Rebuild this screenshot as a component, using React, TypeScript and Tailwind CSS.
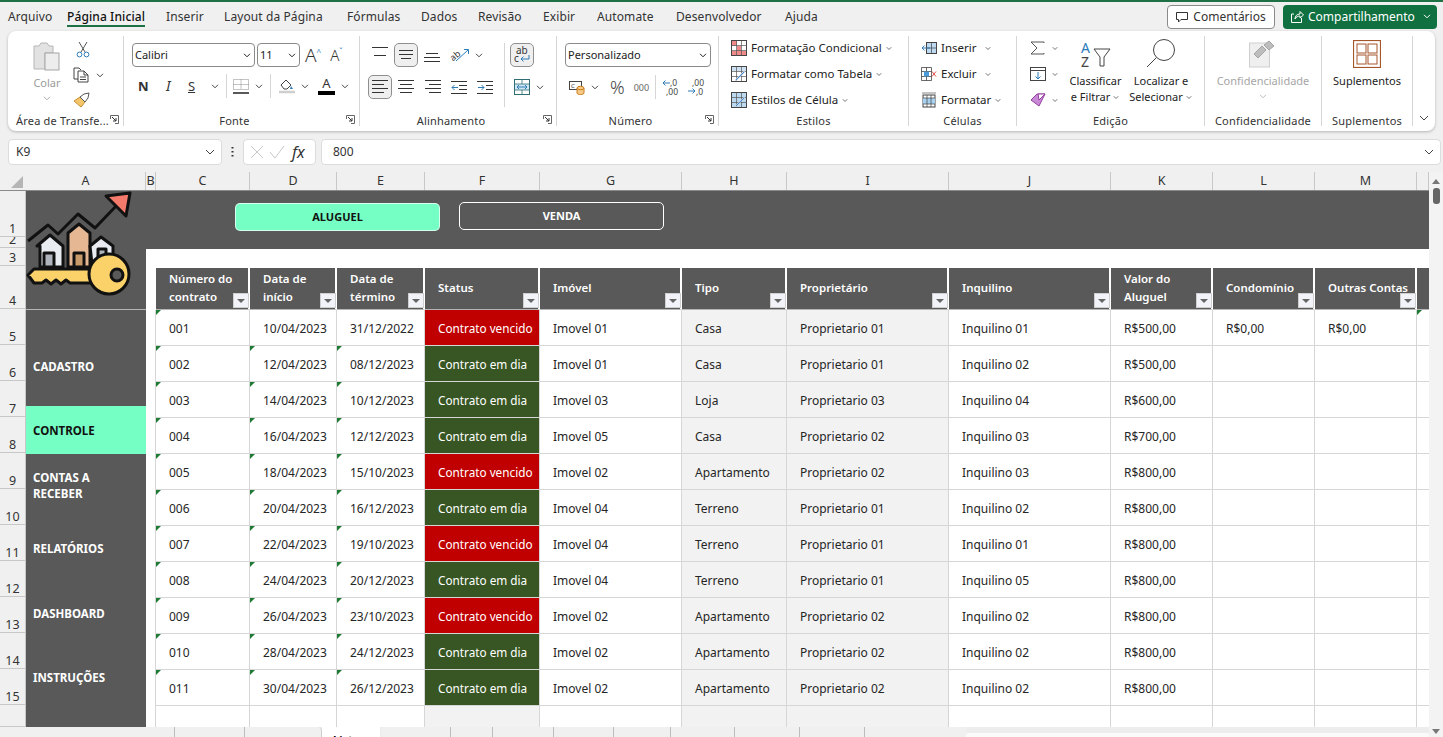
import React from "react";

const Chev = ({ c = "#444", className = "" }: { c?: string; className?: string }) => (
  <svg width="8" height="5" viewBox="0 0 8 5" className={"shrink-0 " + className}>
    <path d="M1 .8l3 3 3-3" fill="none" stroke={c} strokeWidth="1" />
  </svg>
);

// launcher in the corner of a ribbon group
const Launcher = () => (
  <svg width="9" height="9" viewBox="0 0 9 9" className="absolute right-[4px] bottom-[2px]">
    <path d="M.5 4V.5H8.5V8.5H5" fill="none" stroke="#666" />
    <path d="M2 2l4 4M6 3v3H3" fill="none" stroke="#333" />
  </svg>
);

const Group = ({ w, label, launcher, left, children }: { w: string; label: string; launcher?: boolean; left?: boolean; children: React.ReactNode }) => (
  <div className={w + " relative my-[5px] flex shrink-0 flex-col border-r border-[#d6d6d6]"}>
    <div className="h-[77px]">{children}</div>
    <div className={"h-[13px] text-[11px] leading-[15px] text-[#333] tracking-[.2px] whitespace-nowrap " + (left ? "pl-[8px]" : launcher ? "pr-[14px] text-center" : "text-center")}>{label}</div>
    {launcher && <Launcher />}
  </div>
);

const Select = ({ w, text }: { w: string; text: string }) => (
  <div className={w + " flex h-[24px] shrink-0 items-center justify-between rounded-[4px] border border-[#8a8a8a] bg-white pl-[2px] pr-[3px] text-[11px] text-[#222]"}>
    <span>{text}</span>
    <Chev c="#222" />
  </div>
);

// horizontal text lines, used for all the alignment icons
const Lines = ({ rows, x = [0, 0, 0, 0], c = "#333" }: { rows: number[]; x?: number[]; c?: string }) => (
  <svg width="16" height={rows.length * 4} viewBox={`0 0 16 ${rows.length * 4}`} className="shrink-0">
    {rows.map((r, i) => (
      <path key={i} d={`M${x[i]} ${i * 4 + 1.5}h${r}`} stroke={c} strokeWidth="1" />
    ))}
  </svg>
);

const Pressed = ({ className = "", children }: { className?: string; children: React.ReactNode }) => (
  <div className={"flex h-[24px] w-[24px] shrink-0 items-center justify-center rounded-[5px] border border-[#8f8f8f] bg-[#efefef] " + className}>{children}</div>
);

const Sep = ({ className = "" }: { className?: string }) => <div className={"h-[24px] w-px shrink-0 bg-[#d6d6d6] " + className} />;

const ClipboardGroup = () => (
  <div className="flex pl-[22px] pt-[5px]">
    <div className="flex w-[34px] flex-col items-center">
      <svg width="30" height="30" viewBox="0 0 30 30">
        <path d="M2 5h5l2-3h6l2 3h4v7H13v16H2z" fill="#e2e2e2" stroke="#b5b5b5" />
        <rect x="13" y="12" width="14" height="17" fill="#ededed" stroke="#a5a5a5" />
      </svg>
      <span className="mt-[4px] text-[11px] leading-[16px] text-[#9c9c9c]">Colar</span>
      <Chev c="#aaa" className="mt-[5px]" />
    </div>
    <div className="ml-[9px] flex flex-col">
      <svg width="14" height="17" viewBox="0 0 14 17" className="ml-[3px]">
        <path d="M3 1l6 10M11 1L5 11" stroke="#555" fill="none" />
        <circle cx="3.5" cy="13.5" r="2.4" fill="none" stroke="#2c7cb8" />
        <circle cx="10.5" cy="13.5" r="2.4" fill="none" stroke="#2c7cb8" />
      </svg>
      <div className="mt-[9px] flex items-center gap-[7px]">
        <svg width="16" height="16" viewBox="0 0 16 16">
          <path d="M5 12H1V1h5l2 2" fill="none" stroke="#444" />
          <path d="M5 4h6l4 4v7H5zM11 4v4h4M7 10h6M7 12.500h6" fill="none" stroke="#444" />
        </svg>
        <Chev />
      </div>
      <svg width="18" height="16" viewBox="0 0 18 16" className="mt-[9px]">
        <path d="M1 9l6-4 5 5-4 5z" fill="#f3c66c" stroke="#c88d2d" />
        <path d="M7 5l4-3 5-1-1 5-3 4z" fill="#fff" stroke="#555" />
      </svg>
    </div>
  </div>
);

const FontGroup = () => (
  <div className="pl-[8px] pt-[7px]">
    <div className="flex items-center">
      <Select w="w-[123px]" text="Calibri" />
      <Select w="w-[43px] ml-[2px]" text="11" />
      <span className="ml-[5px] text-[19px] leading-none font-light text-[#333]">A</span>
      <span className="mb-[6px] text-[8px] leading-none text-[#2c7cb8]">^</span>
      <span className="ml-[9px] text-[15px] leading-none font-light text-[#333]">A</span>
      <span className="mb-[6px] text-[8px] leading-none text-[#2c7cb8]">ˇ</span>
    </div>
    <div className="mt-[7px] flex h-[24px] items-center text-[13px] text-[#333]">
      <span className="ml-[6px] w-[11px] font-bold leading-none">N</span>
      <span className="ml-[17px] w-[8px] font-['Liberation_Serif',serif] text-[14px] italic leading-none">I</span>
      <span className="ml-[14px] w-[9px] underline leading-none">S</span>
      <Chev className="ml-[14px]" />
      <Sep className="ml-[7px]" />
      <svg width="16" height="15" viewBox="0 0 16 15" className="ml-[6px]">
        <path d="M.5.500h15v10H.5zM8 .5v10M.5 5.500h15" fill="none" stroke="#888" strokeDasharray="1 1" />
        <path d="M0 14h16" stroke="#222" strokeWidth="1.500" />
      </svg>
      <Chev className="ml-[6px]" />
      <Sep className="ml-[7px]" />
      <svg width="16" height="16" viewBox="0 0 16 16" className="ml-[8px]">
        <path d="M2 7l5-5 5 5-4 4H5z" fill="none" stroke="#444" />
        <path d="M12 8l2 3h-3z" fill="#2c7cb8" />
        <path d="M0 14h16" stroke="#cfcfcf" strokeWidth="2.500" />
      </svg>
      <Chev className="ml-[6px]" />
      <div className="ml-[9px] flex w-[17px] flex-col items-center">
        <span className="text-[13px] leading-[13px]">A</span>
        <div className="mt-[1px] h-[4px] w-[17px] bg-black" />
      </div>
      <Chev className="ml-[6px]" />
    </div>
  </div>
);

const AlignGroup = () => (
  <div className="flex pt-[7px]">
    <div className="w-[144px] pl-[8px]">
      <div className="flex h-[24px] items-center">
        <div className="ml-[4px] mb-[6px]"><Lines rows={[16, 0, 12]} x={[0, 0, 2]} /></div>
        <Pressed className="ml-[6px]"><Lines rows={[14, 14, 10]} x={[1, 1, 3]} /></Pressed>
        <div className="ml-[6px] mt-[6px]"><Lines rows={[12, 16, 16]} x={[2, 0, 0]} /></div>
        <svg width="20" height="18" viewBox="0 0 20 18" className="ml-[10px] overflow-visible">
          <text x="0" y="13" fontSize="9" fill="#333" transform="rotate(-40 5 10)">ab</text>
          <path d="M6 15L18 4M14 3.500h4.500V8" fill="none" stroke="#2c7cb8" />
        </svg>
        <Chev className="ml-[5px]" />
      </div>
      <div className="mt-[8px] flex h-[24px] items-center">
        <Pressed><Lines rows={[16, 12, 16, 12]} /></Pressed>
        <div className="ml-[6px]"><Lines rows={[16, 12, 16, 12]} x={[0, 2, 0, 2]} /></div>
        <div className="ml-[11px]"><Lines rows={[16, 12, 16, 12]} x={[0, 4, 0, 4]} /></div>
        <svg width="16" height="15" viewBox="0 0 16 15" className="ml-[10px]">
          <path d="M0 1.500h16M8 5.500h8M8 9.500h8M0 13.500h16" stroke="#333" />
          <path d="M7 7.500H1M3.500 5L1 7.500 3.500 10" fill="none" stroke="#2c7cb8" />
        </svg>
        <svg width="16" height="15" viewBox="0 0 16 15" className="ml-[10px]">
          <path d="M0 1.500h16M9 5.500h7M9 9.500h7M0 13.500h16" stroke="#333" />
          <path d="M1 7.500h6M4.500 5L7 7.500 4.500 10" fill="none" stroke="#2c7cb8" />
        </svg>
      </div>
    </div>
    <div className="h-[64px] w-px bg-[#d6d6d6]" />
    <div className="pl-[5px]">
      <Pressed>
        <svg width="18" height="18" viewBox="0 0 18 18" className="overflow-visible">
          <text x="3" y="8" fontSize="10" fill="#333">ab</text>
          <text x="1" y="16" fontSize="10" fill="#333">c</text>
          <path d="M16 9v4H8M10.500 10.500L8 13l2.500 2.500" fill="none" stroke="#2c7cb8" />
        </svg>
      </Pressed>
      <div className="mt-[8px] flex h-[24px] items-center pl-[4px]">
        <svg width="16" height="16" viewBox="0 0 16 16">
          <rect x=".5" y=".5" width="15" height="15" fill="#fff" stroke="#2f6f73" />
          <rect x="1" y="5" width="14" height="6" fill="#cfe6f5" />
          <path d="M1 5h14M1 11h14M8 1v4M8 11v4" stroke="#2f6f73" strokeWidth=".8" />
          <path d="M3 8h10M5 6L3 8l2 2M11 6l2 2-2 2" fill="none" stroke="#2c7cb8" />
        </svg>
        <Chev className="ml-[6px]" />
      </div>
    </div>
  </div>
);

const NumberGroup = () => (
  <div className="pl-[8px] pt-[7px]">
    <Select w="w-[146px]" text="Personalizado" />
    <div className="mt-[8px] flex h-[24px] items-center text-[#444]">
      <svg width="16" height="15" viewBox="0 0 16 15" className="ml-[4px] overflow-visible">
        <rect x=".5" y="1.500" width="12" height="8" fill="#fff" stroke="#444" />
        <text x="2" y="8" fontSize="6" fill="#333">C</text>
        <path d="M8 8v5c0 2 7 2 7 0V8" fill="#f7c987" stroke="#c87d1c" />
        <ellipse cx="11.500" cy="8" rx="3.500" ry="1.700" fill="#f7c987" stroke="#c87d1c" />
      </svg>
      <Chev className="ml-[6px]" />
      <span className="ml-[11px] text-[18px] leading-none font-light text-[#444]">%</span>
      <span className="ml-[9px] text-[9px] leading-none text-[#666]">000</span>
      <Sep className="ml-[6px]" />
      <svg width="18" height="17" viewBox="0 0 18 17" className="ml-[6px] overflow-visible">
        <text x="8" y="7" fontSize="8.500" fill="#444">,0</text>
        <text x="4" y="15.500" fontSize="8.500" fill="#444">,00</text>
        <path d="M8 4H1M3.500 1.500L1 4l2.500 2.500" fill="none" stroke="#2c7cb8" />
      </svg>
      <svg width="18" height="17" viewBox="0 0 18 17" className="ml-[8px] overflow-visible">
        <text x="4" y="7" fontSize="8.500" fill="#444">,00</text>
        <text x="8" y="15.500" fontSize="8.500" fill="#444">,0</text>
        <path d="M0 12h7M4.500 9.500L7 12l-2.500 2.500" fill="none" stroke="#2c7cb8" />
      </svg>
    </div>
  </div>
);

const SheetIcon = ({ kind }: { kind: "cond" | "table" | "style" }) => (
  <svg width="16" height="16" viewBox="0 0 16 16" className="shrink-0">
    <rect x=".5" y=".5" width="15" height="15" fill={kind === "style" ? "#bcd9f0" : "#fff"} stroke="#444" />
    {kind === "cond" && <path d="M1 1h5v5H1zM1 11h14v4H1zM6 6h4v5H6z" fill="#ef8a8a" />}
    {kind === "table" && <path d="M1 1h14v4H1z" fill="#cfe2f3" />}
    <path d="M.5 5.500h15M.5 10.500h15M5.500 .5v15M10.500 .5v15" stroke="#555" strokeWidth=".7" />
    {kind !== "cond" && <path d="M4 14l9-9 1 1-9 9z" fill="#4a88c7" stroke="#fff" strokeWidth=".5" />}
  </svg>
);

const StylesGroup = () => (
  <div className="-mt-[1px] flex flex-col pl-[12px] text-[11.500px] text-[#222]">
    {[
      ["cond", "Formatação Condicional"],
      ["table", "Formatar como Tabela"],
      ["style", "Estilos de Célula"],
    ].map(([k, t]) => (
      <div key={t} className="flex h-[26px] items-center">
        <SheetIcon kind={k as "cond" | "table" | "style"} />
        <span className="ml-[4px] whitespace-nowrap">{t}</span>
        <Chev className="ml-[3px] scale-75" />
      </div>
    ))}
  </div>
);

const CellsGroup = () => (
  <div className="-mt-[1px] flex flex-col pl-[12px] text-[11.500px] text-[#222]">
    <div className="flex h-[26px] items-center">
      <svg width="16" height="14" viewBox="0 0 16 14">
        <rect x="5.500" y="1.500" width="10" height="11" fill="#bcd9f0" stroke="#444" />
        <path d="M5.500 7h10M10.500 1.500v11" stroke="#444" strokeWidth=".7" />
        <path d="M9 7H1M3.500 4.500L1 7l2.500 2.500" fill="none" stroke="#2c7cb8" />
      </svg>
      <span className="ml-[4px] w-[43px]">Inserir</span>
      <Chev className="scale-75" />
    </div>
    <div className="flex h-[26px] items-center">
      <svg width="16" height="14" viewBox="0 0 16 14">
        <path d="M.5.500h10v13H.5zM.5 4.500h10M.5 9.500h10M5.500.5v13" fill="#fff" stroke="#444" strokeWidth=".8" />
        <rect x="3" y="4.500" width="5" height="5" fill="#4a9bd8" />
        <path d="M11 4.500l4 5M15 4.500l-4 5" stroke="#e0524d" />
      </svg>
      <span className="ml-[4px] w-[43px]">Excluir</span>
      <Chev className="scale-75" />
    </div>
    <div className="flex h-[26px] items-center">
      <svg width="16" height="16" viewBox="0 0 16 16">
        <rect x="2" y="3" width="12" height="12" fill="#fff" stroke="#444" />
        <rect x="2" y="6" width="12" height="6" fill="#a9d1f0" />
        <path d="M2 6h12M2 12h12M6 3v12M10 3v12" stroke="#444" strokeWidth=".7" />
        <path d="M1 1h14" stroke="#888" />
      </svg>
      <span className="ml-[4px]">Formatar</span>
      <Chev className="ml-[3px] scale-75" />
    </div>
  </div>
);

const EditGroup = () => (
  <div className="-mt-[1px] flex text-[#222]">
    <div className="flex w-[48px] flex-col pl-[13px]">
      <div className="flex h-[26px] items-center">
        <svg width="15" height="14" viewBox="0 0 15 14">
          <path d="M14 2V1H1l6 6-6 6h13v-1" fill="none" stroke="#555" />
        </svg>
        <Chev className="ml-[6px] scale-75" />
      </div>
      <div className="flex h-[26px] items-center">
        <svg width="16" height="14" viewBox="0 0 16 14">
          <rect x=".5" y=".5" width="15" height="13" fill="#fff" stroke="#444" />
          <path d="M.5 3.500h15" stroke="#444" />
          <path d="M8 5v7M5.500 9.500L8 12l2.500-2.500" fill="none" stroke="#2c7cb8" />
        </svg>
        <Chev className="ml-[5px] scale-75" />
      </div>
      <div className="flex h-[26px] items-center">
        <svg width="16" height="14" viewBox="0 0 16 14">
          <path d="M1 7l6-6 8 0-6 12z" fill="#c889d6" stroke="#95409f" />
          <path d="M8 1h7L9 7z" fill="#fff" stroke="#95409f" />
        </svg>
        <Chev className="ml-[5px] scale-75" />
      </div>
    </div>
    <div className="flex w-[61px] flex-col items-center pt-[3px] text-[11px] leading-[16px]">
      <svg width="32" height="28" viewBox="0 0 32 28" className="mt-[2px] overflow-visible">
        <text x="1" y="13" fontSize="14" fill="#2c7cb8">A</text>
        <text x="1" y="27" fontSize="14" fill="#444">Z</text>
        <path d="M14 9h16l-6 8v9h-4v-9z" fill="none" stroke="#444" />
      </svg>
      <span className="mt-[5px] whitespace-nowrap">Classificar</span>
      <span className="flex items-center whitespace-nowrap">e Filtrar<Chev className="ml-[2px] scale-75" /></span>
    </div>
    <div className="ml-[1px] flex w-[68px] flex-col items-center pt-[3px] text-[11px] leading-[16px]">
      <svg width="30" height="30" viewBox="0 0 30 30">
        <circle cx="18" cy="12" r="10.500" fill="none" stroke="#444" />
        <path d="M10.500 19.500L1 29" stroke="#444" />
      </svg>
      <span className="mt-[5px] whitespace-nowrap">Localizar e</span>
      <span className="flex items-center whitespace-nowrap">Selecionar<Chev className="ml-[2px] scale-75" /></span>
    </div>
  </div>
);

const tabs = [
  { t: "Arquivo", w: "w-[59px]" },
  { t: "Página Inicial", w: "w-[99px]", active: true },
  { t: "Inserir", w: "w-[58px]" },
  { t: "Layout da Página", w: "w-[123px]" },
  { t: "Fórmulas", w: "w-[74px]" },
  { t: "Dados", w: "w-[57px]" },
  { t: "Revisão", w: "w-[65px]" },
  { t: "Exibir", w: "w-[54px]" },
  { t: "Automate", w: "w-[79px]" },
  { t: "Desenvolvedor", w: "w-[109px]" },
  { t: "Ajuda", w: "w-[60px]" },
];

const TopBar = () => (
  <div className="flex h-[29px] items-center pl-[8px] text-[12px] text-[#333]">
    {tabs.map((t) => (
      <div key={t.t} className={t.w + " shrink-0 whitespace-nowrap tracking-[.1px]"}>
        <span className={"relative inline-block " + (t.active ? "font-medium text-[#111]" : "")}>
          {t.t}
          {t.active && <span className="absolute left-0 right-0 top-[17px] h-[2px] bg-[#1e7145]" />}
        </span>
      </div>
    ))}
    <div className="ml-auto flex items-center pr-[6px]">
      <div className="flex h-[24px] w-[108px] items-center justify-center gap-[5px] rounded-[4px] border border-[#8a8a8a] bg-white">
        <svg width="12" height="12" viewBox="0 0 12 12">
          <path d="M.5 1.500h11v7H5L2.500 11V8.500h-2z" fill="none" stroke="#333" />
        </svg>
        Comentários
      </div>
      <div className="ml-[8px] flex h-[24px] w-[154px] items-center rounded-[4px] bg-[#107040] pl-[8px] text-white">
        <svg width="13" height="13" viewBox="0 0 13 13">
          <path d="M3 4H.5v8.500h10V8M4 9c0-3 2-5 5-5V1.500L12.500 5 9 8V6C7 6 5 7 4 9z" fill="none" stroke="#fff" />
        </svg>
        <span className="ml-[4px]">Compartilhamento</span>
        <Chev c="#fff" className="ml-auto mr-[6px]" />
      </div>
    </div>
  </div>
);

const Ribbon = () => (
  <div className="mx-[8px] flex h-[100px] rounded-[8px] bg-white shadow-[0_1px_3px_rgba(0,0,0,0.25)]">
    <Group w="w-[116px]" label="Área de Transfe..." launcher left><ClipboardGroup /></Group>
    <Group w="w-[236px]" label="Fonte" launcher><FontGroup /></Group>
    <Group w="w-[197px]" label="Alinhamento" launcher><AlignGroup /></Group>
    <Group w="w-[162px]" label="Número" launcher><NumberGroup /></Group>
    <Group w="w-[190px]" label="Estilos"><StylesGroup /></Group>
    <Group w="w-[108px]" label="Células"><CellsGroup /></Group>
    <Group w="w-[188px]" label="Edição"><EditGroup /></Group>
    <Group w="w-[117px]" label="Confidencialidade">
      <div className="flex flex-col items-center pt-[4px] text-[11px] text-[#a6a6a6]">
        <svg width="28" height="28" viewBox="0 0 28 28">
          <rect x=".5" y="3" width="20" height="24" fill="#efefef" stroke="#cfcfcf" />
          <path d="M5 14l8-8 4 4-8 8zM15 5l5-4 5 5-5 4z" fill="#bdbdbd" stroke="#a5a5a5" />
        </svg>
        <span className="mt-[5px] leading-[16px] whitespace-nowrap">Confidencialidade</span>
        <Chev c="#bbb" className="mt-[5px]" />
      </div>
    </Group>
    <Group w="w-[91px]" label="Suplementos">
      <div className="flex flex-col items-center pt-[4px] text-[11px] text-[#222]">
        <svg width="28" height="28" viewBox="0 0 28 28">
          <rect x=".5" y=".5" width="27" height="27" fill="#fff" stroke="#a5552a" strokeWidth="1.200" />
          <rect x="4" y="4" width="9" height="9" fill="#fff" stroke="#a5552a" />
          <rect x="15" y="4" width="9" height="9" fill="#fff" stroke="#a5552a" />
          <rect x="4" y="15" width="9" height="9" fill="#fff" stroke="#a5552a" />
          <rect x="15" y="15" width="9" height="9" fill="#fff" stroke="#a5552a" />
        </svg>
        <span className="mt-[5px] leading-[16px] whitespace-nowrap">Suplementos</span>
      </div>
    </Group>
    <div className="flex flex-1 items-end justify-center pb-[10px]">
      <svg width="10" height="6" viewBox="0 0 10 6"><path d="M1 1l4 4 4-4" fill="none" stroke="#444" /></svg>
    </div>
  </div>
);

const FormulaBar = () => (
  <div className="mt-[8px] flex h-[26px] px-[8px] pr-[2px] text-[12px] text-[#333]">
    <div className="flex w-[214px] items-center justify-between rounded-[4px] border border-[#dcdcdc] bg-white pl-[7px] pr-[6px]">
      K9
      <svg width="10" height="6" viewBox="0 0 10 6"><path d="M1 1l4 4 4-4" fill="none" stroke="#444" /></svg>
    </div>
    <div className="flex w-[21px] items-center justify-center">
      <svg width="3" height="12" viewBox="0 0 3 12"><path d="M1.500 1v1.500M1.500 5v1.500M1.500 9v1.500" stroke="#333" strokeWidth="2" /></svg>
    </div>
    <div className="flex w-[73px] items-center rounded-[4px] border border-[#dcdcdc] bg-white pl-[6px]">
      <svg width="14" height="14" viewBox="0 0 14 14"><path d="M1 1l12 12M13 1L1 13" stroke="#c8c8c8" /></svg>
      <svg width="16" height="14" viewBox="0 0 16 14" className="ml-[5px]"><path d="M1 7l5 6L15 1" fill="none" stroke="#c8c8c8" /></svg>
      <span className="ml-[7px] font-['Liberation_Serif',serif] text-[16px] italic text-[#333]">fx</span>
    </div>
    <div className="ml-[5px] flex flex-1 items-center justify-between rounded-[4px] border border-[#dcdcdc] bg-white pl-[11px] pr-[6px]">
      800
      <svg width="10" height="6" viewBox="0 0 10 6"><path d="M1 1l4 4 4-4" fill="none" stroke="#444" /></svg>
    </div>
  </div>
);

const colHeads = [
  { t: "A", w: "w-[120px]" },
  { t: "B", w: "w-[10px]" },
  { t: "C", w: "w-[94px]" },
  { t: "D", w: "w-[87px]" },
  { t: "E", w: "w-[88px]" },
  { t: "F", w: "w-[115px]" },
  { t: "G", w: "w-[142px]" },
  { t: "H", w: "w-[105px]" },
  { t: "I", w: "w-[162px]" },
  { t: "J", w: "w-[162px]" },
  { t: "K", w: "w-[102px]" },
  { t: "L", w: "w-[102px]" },
  { t: "M", w: "w-[102px]" },
  { t: "", w: "w-[12px]" },
];

const rowHeads = [
  { n: 1, h: "h-[47px]" },
  { n: 2, h: "h-[11px]" },
  { n: 3, h: "h-[18px]" },
  { n: 4, h: "h-[43px]" },
  ...[5, 6, 7, 8, 9, 10, 11, 12, 13, 14, 15].map((n) => ({ n, h: "h-[36px]" })),
  { n: 16, h: "h-[22px]" },
];

const Logo = () => (
  <svg width="120" height="119" viewBox="0 0 120 119" stroke="#111" strokeWidth="3" strokeLinejoin="round">
    <path d="M2 50L22 34l10 9 20-20 17 14 23-24" fill="none" />
    <path d="M80 5l24-3-4 23z" fill="#f47a6c" />
    <path d="M11 55L24 44l13 11v21H14V55z" fill="#e8ebf0" />
    <rect x="18" y="62" width="10" height="14" fill="#b0b4bc" />
    <path d="M42 42L53 33l11 9v34H42z" fill="#e5b893" />
    <rect x="48" y="62" width="10" height="14" fill="#c99a6a" />
    <path d="M64 55l11-9 12 9v18H66z" fill="#e8ebf0" />
    <rect x="72" y="58" width="8" height="10" fill="#b0b4bc" />
    <path d="M2 84l6-6h58v14H44l-4-3-5 4-5-4-5 4-5-4-4 3H8z" fill="#fbd26a" />
    <circle cx="83" cy="83" r="20" fill="#fbd26a" />
    <circle cx="91" cy="84" r="6" fill="#595959" />
  </svg>
);

const nav = [
  { t: "CADASTRO", c: "h-[96px] pt-[18px] text-white" },
  { t: "CONTROLE", c: "h-[48px] pt-[1px] bg-[#76ffc4] text-[#111]" },
  { t: "CONTAS A RECEBER", c: "h-[64px] text-white" },
  { t: "RELATÓRIOS", c: "h-[62px] text-white" },
  { t: "DASHBOARD", c: "h-[66px] pt-[1px] text-white" },
  { t: "INSTRUÇÕES", c: "h-[64px] text-white" },
];

const heads = [
  "Número do contrato", "Data de início", "Data de término", "Status", "Imóvel", "Tipo",
  "Proprietário", "Inquilino", "Valor do Aluguel", "Condomínio", "Outras Contas",
];

type Row = [string, string, string, boolean, string, string, string, string, string];

const rows: Row[] = [
  ["001", "10/04/2023", "31/12/2022", false, "Imovel 01", "Casa", "Proprietario 01", "Inquilino 01", "R$500,00"],
  ["002", "12/04/2023", "08/12/2023", true, "Imovel 01", "Casa", "Proprietario 01", "Inquilino 02", "R$500,00"],
  ["003", "14/04/2023", "10/12/2023", true, "Imovel 03", "Loja", "Proprietario 03", "Inquilino 04", "R$600,00"],
  ["004", "16/04/2023", "12/12/2023", true, "Imovel 05", "Casa", "Proprietario 02", "Inquilino 03", "R$700,00"],
  ["005", "18/04/2023", "15/10/2023", false, "Imovel 02", "Apartamento", "Proprietario 02", "Inquilino 03", "R$800,00"],
  ["006", "20/04/2023", "16/12/2023", true, "Imovel 04", "Terreno", "Proprietario 01", "Inquilino 02", "R$800,00"],
  ["007", "22/04/2023", "19/10/2023", false, "Imovel 04", "Terreno", "Proprietario 01", "Inquilino 01", "R$800,00"],
  ["008", "24/04/2023", "20/12/2023", true, "Imovel 04", "Terreno", "Proprietario 01", "Inquilino 05", "R$800,00"],
  ["009", "26/04/2023", "23/10/2023", false, "Imovel 02", "Apartamento", "Proprietario 02", "Inquilino 02", "R$800,00"],
  ["010", "28/04/2023", "24/12/2023", true, "Imovel 02", "Apartamento", "Proprietario 02", "Inquilino 02", "R$800,00"],
  ["011", "30/04/2023", "26/12/2023", true, "Imovel 02", "Apartamento", "Proprietario 02", "Inquilino 02", "R$800,00"],
];

const Cell = ({ children, flag, className = "bg-white text-[#262626]" }: { children?: React.ReactNode; flag?: boolean; className?: string }) => (
  <div className={"relative flex items-center whitespace-nowrap border-b border-r border-[#d6d6d6] pl-[13px] pt-[2px] " + className}>
    {flag && <span className="absolute left-0 top-0 border-r-[5px] border-t-[5px] border-r-transparent border-t-[#1e7a34]" />}
    {children}
  </div>
);

const Table = () => (
  <div className="grid grid-cols-[10px_94px_87px_88px_115px_142px_105px_162px_162px_102px_102px_102px_12px] grid-rows-[42px_repeat(11,36px)_22px] bg-white text-[12px] text-[#262626]">
    <div />
    {heads.map((h) => (
      <div key={h} className="relative flex items-center border-b border-r-2 border-b-[#b5b5b5] border-r-white bg-[#595959] pb-[2px] pl-[13px] pr-[6px] text-[11.500px] font-semibold leading-[18px] text-white">
        {h}
        <div className="absolute bottom-[1px] right-[-1px] flex h-[15px] w-[16px] items-center justify-center border border-[#cfcfcf] bg-[#f1f3f9]">
          <span className="border-x-[4px] border-t-[4px] border-x-transparent border-t-[#666]" />
        </div>
      </div>
    ))}
    <div className="border-b border-b-[#b5b5b5] bg-[#595959]" />
    {rows.map((r, i) => (
      <React.Fragment key={r[0]}>
        <div className="border-r border-[#d6d6d6]" />
        <Cell flag>{r[0]}</Cell>
        <Cell flag={i > 0}>{r[1]}</Cell>
        <Cell flag={i > 0}>{r[2]}</Cell>
        <Cell className={(r[3] ? "bg-[#375623]" : "bg-[#c00000]") + " text-[11.750px] text-white"}>{r[3] ? "Contrato em dia" : "Contrato vencido"}</Cell>
        <Cell>{r[4]}</Cell>
        <Cell className="bg-[#f2f2f2] text-[#262626]">{r[5]}</Cell>
        <Cell className="bg-[#f2f2f2] text-[#262626]">{r[6]}</Cell>
        <Cell>{r[7]}</Cell>
        <Cell>{r[8]}</Cell>
        <Cell>{i === 0 ? "R$0,00" : ""}</Cell>
        <Cell>{i === 0 ? "R$0,00" : ""}</Cell>
        <Cell flag={i === 0} />
      </React.Fragment>
    ))}
    <div className="border-r border-[#d6d6d6]" />
    <Cell /><Cell /><Cell />
    <Cell className="bg-[#f2f2f2]" />
    <Cell />
    <Cell className="bg-[#f2f2f2]" />
    <Cell className="bg-[#f2f2f2]" />
    <Cell /><Cell /><Cell /><Cell /><Cell />
  </div>
);

const SheetTabs = () => (
  <div className="flex h-[10px] overflow-hidden bg-[#ededed]">
    <div className="flex h-full w-[322px] rounded-tr-[4px] border-r border-[#cfcfcf] bg-[#f0f0f0]">
      <div className="w-[175px] border-r border-[#bdbdbd]" />
      <div className="w-[70px] border-r border-[#bdbdbd]" />
    </div>
    <div className="h-full w-[58px] overflow-hidden bg-white pl-[11px] pt-[6px] text-[11px] font-bold leading-[14px] text-black">Lista</div>
    <div className="ml-px flex h-full w-[585px] rounded-tl-[4px] bg-[#f0f0f0]">
      <div className="w-[70px] border-r border-[#bdbdbd]" />
      <div className="w-[42px] border-r border-[#bdbdbd]" />
      <div className="w-[61px] border-r border-[#bdbdbd]" />
      <div className="w-[60px] border-r border-[#bdbdbd]" />
      <div className="w-[57px] border-r border-[#bdbdbd]" />
      <div className="w-[64px] border-r border-[#bdbdbd]" />
      <div className="w-[65px] border-r border-[#bdbdbd]" />
      <div className="w-[65px] border-r border-[#bdbdbd]" />
    </div>
    <div className="mt-[6px] h-full flex-1 rounded-[2px] bg-[#fafafa]" />
  </div>
);

const Sheet = () => (
  <div className="mt-[7px] flex h-[565px] text-[#333]">
    <div className="w-[1429px]">
      <div className="flex h-[19px] border-b border-[#8a8a8a] bg-[#f0f0f0] text-[12.500px]">
        <div className="relative w-[26px] shrink-0">
          <span className="absolute bottom-[2px] right-[3px] border-b-[12px] border-l-[12px] border-b-[#b5b5b5] border-l-transparent" />
        </div>
        {colHeads.map((c) => (
          <div key={c.t} className={c.w + " flex shrink-0 items-center justify-center border-r border-[#c8c8c8] leading-none"}>{c.t}</div>
        ))}
      </div>
      <div className="flex h-[536px] overflow-hidden">
        <div className="-mt-[1px] w-[26px] shrink-0 bg-[#f0f0f0] text-[12.500px]">
          {rowHeads.map((r) => (
            <div key={r.n} className={r.h + " flex items-end justify-center overflow-hidden border-b border-r border-[#c8c8c8] leading-[15px]"}>
              {r.n < 16 ? r.n : ""}
            </div>
          ))}
        </div>
        <div className="w-[120px] shrink-0 bg-[#595959] text-[11.500px] font-bold leading-[16px]">
          <div className="h-[119px] border-b border-[#b5b5b5]"><Logo /></div>
          {nav.map((n) => (
            <div key={n.t} className={n.c + " flex items-center pl-[7px] pr-[16px]"}>{n.t}</div>
          ))}
        </div>
        <div className="w-[1283px] shrink-0">
          <div className="flex h-[58px] items-start gap-[19px] bg-[#595959] pl-[89px] pt-[12px] text-[11px] font-bold">
            <div className="flex h-[28px] w-[205px] items-center justify-center rounded-[5px] border border-white/70 bg-[#76ffc4] pt-[1px] text-[#111]">ALUGUEL</div>
            <div className="-mt-[1px] flex h-[28px] w-[205px] items-center justify-center rounded-[5px] border border-white pt-[1px] text-white">VENDA</div>
          </div>
          <div className="h-[19px] bg-white" />
          <Table />
        </div>
      </div>
      <SheetTabs />
    </div>
    <div className="flex w-[14px] flex-col items-center bg-[#f3f3f3] pt-[7px]">
      <span className="border-x-[4px] border-b-[5px] border-x-transparent border-b-[#777]" />
      <div className="mt-[4px] h-[16px] w-[7px] rounded-[3px] bg-[#666]" />
      <span className="mb-[3px] mt-auto border-x-[4px] border-t-[5px] border-x-transparent border-t-[#777]" />
    </div>
  </div>
);

export default function App() {
  return (
    <div className="h-[737px] w-[1443px] overflow-hidden border-t-2 border-[#1e7145] bg-[#f0f0f0] font-['Open_Sans',sans-serif]">
      <TopBar />
      <Ribbon />
      <FormulaBar />
      <Sheet />
    </div>
  );
}
